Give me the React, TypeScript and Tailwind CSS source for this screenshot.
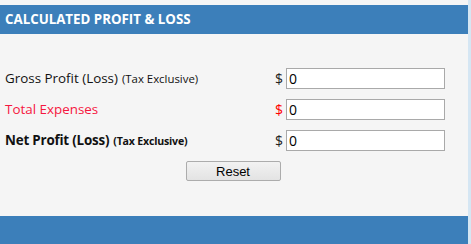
import { useState } from "react";

const ROWS = [
  { key: "gross", label: "Gross Profit (Loss)", note: "(Tax Exclusive)", tone: "normal" },
  { key: "expenses", label: "Total Expenses", note: "", tone: "red" },
  { key: "net", label: "Net Profit (Loss)", note: "(Tax Exclusive)", tone: "bold" },
];

export default function App() {
  const [values, setValues] = useState<Record<string, string>>({ gross: "0", expenses: "0", net: "0" });

  const reset = () => setValues({ gross: "0", expenses: "0", net: "0" });

  return (
    <div className="flex h-[244px] w-[471px] overflow-hidden bg-[#f5f5f5] font-['Open_Sans',sans-serif]">
      <div className="flex w-[468px] flex-col pt-[5px]">
        {/* Header bar */}
        <div className="flex h-[29px] items-center bg-[#3c7fba] pl-[5px]">
          <h2 className="text-[13.3px] font-bold text-white">CALCULATED PROFIT &amp; LOSS</h2>
        </div>

        {/* Form rows */}
        <div className="flex flex-col gap-[10px] pt-[34px] pr-[23px] pl-[5px]">
          {ROWS.map((row) => (
            <div key={row.key} className="flex h-[21px] items-center">
              <div
                className={cn(
                  "flex-1 text-[13.4px]",
                  row.tone === "red" ? "text-[#f5173f]" : "text-[#111]",
                  row.tone === "bold" && "font-bold tracking-[-0.2px]"
                )}
              >
                {row.label}
                {row.note && (
                  <span className={cn("ml-[4px]", row.tone === "bold" ? "text-[10.6px]" : "text-[11.4px]")}>
                    {row.note}
                  </span>
                )}
              </div>
              <span className={cn("mr-[3px] text-[14px]", row.tone === "red" ? "text-[#f00]" : "text-[#222]")}>$</span>
              <input
                type="text"
                value={values[row.key]}
                onChange={(e) => setValues({ ...values, [row.key]: e.target.value })}
                className="h-[21px] w-[159px] border border-[#a9a9a9] bg-white px-[2px] text-[14px] text-black outline-none"
              />
            </div>
          ))}
        </div>

        <div className="flex justify-center pt-[10px] pr-[2px]">
          <button
            onClick={reset}
            className="h-[20px] w-[95px] rounded-[2px] border border-[#acacac] bg-gradient-to-b from-[#f2f2f2] to-[#e3e3e3] font-['Liberation_Sans',sans-serif] text-[13px] leading-none text-black"
          >
            Reset
          </button>
        </div>

        <div className="mt-auto h-[28px] bg-[#3c7fba]" />
      </div>
      <div className="w-[3px] bg-[#d5e6f3]" />
    </div>
  );
}

function cn(...args: (string | boolean | undefined | null)[]) {
  return args.filter(Boolean).join(" ");
}
